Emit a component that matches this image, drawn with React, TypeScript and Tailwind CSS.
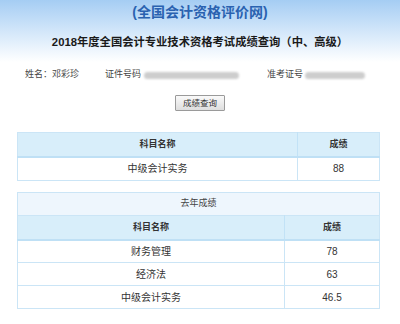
// Score lookup result page (accounting qualification exam).

const cjk = { fontFamily: '"Liberation Sans", "Noto Sans CJK SC", sans-serif' };

const lastYear = [
  { name: "财务管理", score: "78" },
  { name: "经济法", score: "63" },
  { name: "中级会计实务", score: "46.5" },
];

function Blur({ w }: { w: string }) {
  return (
    <span
      className={`inline-block h-[7px] ${w} rounded-sm bg-[#cdcdcd] blur-[1px]`}
    />
  );
}

export default function App() {
  return (
    <div className="w-[400px] h-[324px] bg-white text-[#333]" style={cjk}>
      <div className="h-[62px] bg-gradient-to-b from-[#a5cdf3] to-white flex flex-col items-center">
        <div className="mt-[3px] text-[14px] leading-[18px] font-bold text-[#2a62b0]">
          (全国会计资格评价网)
        </div>
        <div className="mt-[13px] text-[11.3px] leading-[16px] font-bold text-[#1a1a1a]">
          2018年度全国会计专业技术资格考试成绩查询（中、高级）
        </div>
      </div>

      <div className="h-[26px] flex items-center text-[9px] text-[#444]">
        <span className="ml-[25px] w-[80px]">姓名：邓彩珍</span>
        <span>证件号码</span>
        <span className="ml-[3px] w-[123px] flex">
          <Blur w="w-[95px]" />
        </span>
        <span>准考证号</span>
        <span className="ml-[2px] flex">
          <Blur w="w-[60px]" />
        </span>
      </div>

      <div className="flex justify-center mt-[7px]">
        <button className="w-[50px] h-[16px] text-[8.5px] leading-none text-[#333] border border-[#9a9a9a] bg-gradient-to-b from-[#fafafa] to-[#dedede] rounded-[1px]">
          成绩查询
        </button>
      </div>

      <table className="ml-[17px] mt-[21px] w-[363px] border-collapse border border-[#cbe5f6]">
        <thead>
          <tr className="h-[24px] bg-[#d8eefa] border-b-2 border-[#bfe0f5]">
            <th className="text-[9px] font-bold text-[#333] border-r border-[#c2e2f6]">
              科目名称
            </th>
            <th className="w-[82px] text-[9px] font-bold text-[#333]">成绩</th>
          </tr>
        </thead>
        <tbody>
          <tr className="h-[24px]">
            <td className="text-center text-[10px] border-r border-[#cbe5f6]">
              中级会计实务
            </td>
            <td className="text-center text-[10px]">88</td>
          </tr>
        </tbody>
      </table>

      <table className="ml-[17px] mt-[11px] w-[363px] border-collapse border border-[#cbe5f6]">
        <thead>
          <tr className="h-[23px] bg-[#eef6fd] border-b border-[#cbe5f6]">
            <th colSpan={2} className="text-[9px] font-normal text-[#444]">
              去年成绩
            </th>
          </tr>
          <tr className="h-[24px] bg-[#d8eefa] border-b-2 border-[#bfe0f5]">
            <th className="text-[9px] font-bold text-[#333] border-r border-[#c2e2f6]">
              科目名称
            </th>
            <th className="w-[95px] text-[9px] font-bold text-[#333]">成绩</th>
          </tr>
        </thead>
        <tbody>
          {lastYear.map((r) => (
            <tr key={r.name} className="h-[23px] border-b border-[#cbe5f6]">
              <td className="text-center text-[10px] border-r border-[#cbe5f6]">
                {r.name}
              </td>
              <td className="text-center text-[10px]">{r.score}</td>
            </tr>
          ))}
        </tbody>
      </table>
    </div>
  );
}
